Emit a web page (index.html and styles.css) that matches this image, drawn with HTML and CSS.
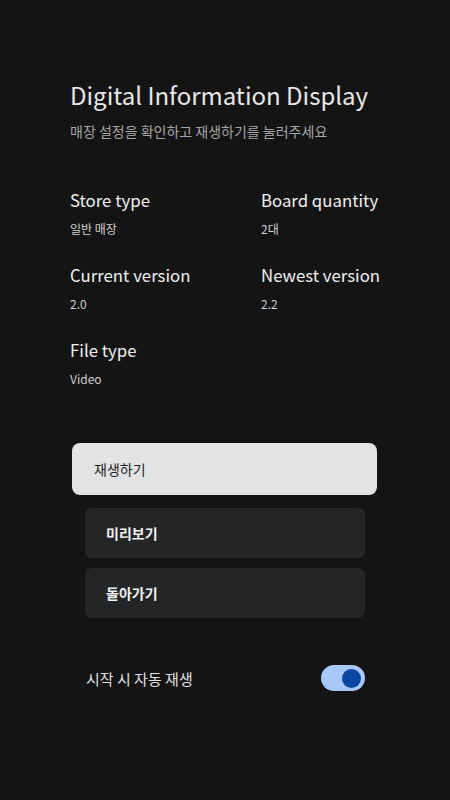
FILE: index.html
```html
<!DOCTYPE html>
<html>
<head>
  <title>Digital Information Display</title>
  <link rel="stylesheet" href="styles.css">
</head>
<body>
  <div class="screen">
    <h1 class="title">Digital Information Display</h1>
    <p class="subtitle">매장 설정을 확인하고 재생하기를 눌러주세요</p>

    <div class="info-grid">
      <div class="info-item">
        <div class="info-label">Store type</div>
        <div class="info-value">일반 매장</div>
      </div>
      <div class="info-item">
        <div class="info-label">Board quantity</div>
        <div class="info-value">2대</div>
      </div>
      <div class="info-item">
        <div class="info-label">Current version</div>
        <div class="info-value">2.0</div>
      </div>
      <div class="info-item">
        <div class="info-label">Newest version</div>
        <div class="info-value">2.2</div>
      </div>
      <div class="info-item">
        <div class="info-label">File type</div>
        <div class="info-value">Video</div>
      </div>
    </div>

    <div class="actions">
      <button class="action focused">재생하기</button>
      <button class="action">미리보기</button>
      <button class="action">돌아가기</button>
    </div>

    <div class="setting-row">
      <span class="setting-label">시작 시 자동 재생</span>
      <span class="switch on"><span class="switch-thumb"></span></span>
    </div>
  </div>
</body>
</html>
```

FILE: styles.css
```css
body {
  margin: 0;
  background: #141414;
  font-family: "Noto Sans CJK KR", "Noto Sans", sans-serif;
  color: #ececec;
}
.screen {
  padding: 78px 70px 0 70px;
}
.title {
  margin: 0;
  font-size: 24px;
  font-weight: 400;
  line-height: 34px;
  color: #e8e8e8;
  white-space: nowrap;
}
.subtitle {
  margin: 9px 0 0 0;
  font-size: 14px;
  line-height: 20px;
  color: #a6a6a6;
}
.info-grid {
  display: grid;
  grid-template-columns: 191px 1fr;
  row-gap: 25px;
  margin-top: 47px;
}
.info-label {
  font-size: 16.8px;
  line-height: 24px;
  color: #f0f0f0;
  white-space: nowrap;
}
.info-value {
  margin-top: 8px;
  font-size: 12px;
  line-height: 18px;
  color: #cfcfcf;
}
.actions {
  display: flex;
  flex-direction: column;
  gap: 10px;
  margin: 55px 15px 0 15px;
}
.action {
  height: 50px;
  padding: 0 21px;
  border: none;
  border-radius: 7px;
  background: #242527;
  color: #f2f2f2;
  font-family: inherit;
  font-size: 14px;
  font-weight: 700;
  text-align: left;
}
.action.focused {
  height: 52px;
  margin: 0 -12px 3px -13px;
  padding: 0 22px;
  border-radius: 8px;
  background: #e3e3e3;
  color: #1c1c1c;
  font-weight: 400;
}
.setting-row {
  display: flex;
  align-items: center;
  justify-content: space-between;
  margin: 47px 15px 0 16px;
}
.setting-label {
  font-size: 15px;
  color: #e0e0e0;
}
.switch {
  display: flex;
  align-items: center;
  justify-content: flex-end;
  width: 44px;
  height: 26px;
  padding: 0 4px;
  box-sizing: border-box;
  border-radius: 13px;
  background: #a8c7fa;
}
.switch-thumb {
  width: 19px;
  height: 19px;
  border-radius: 50%;
  background: #0b47a1;
}
```
